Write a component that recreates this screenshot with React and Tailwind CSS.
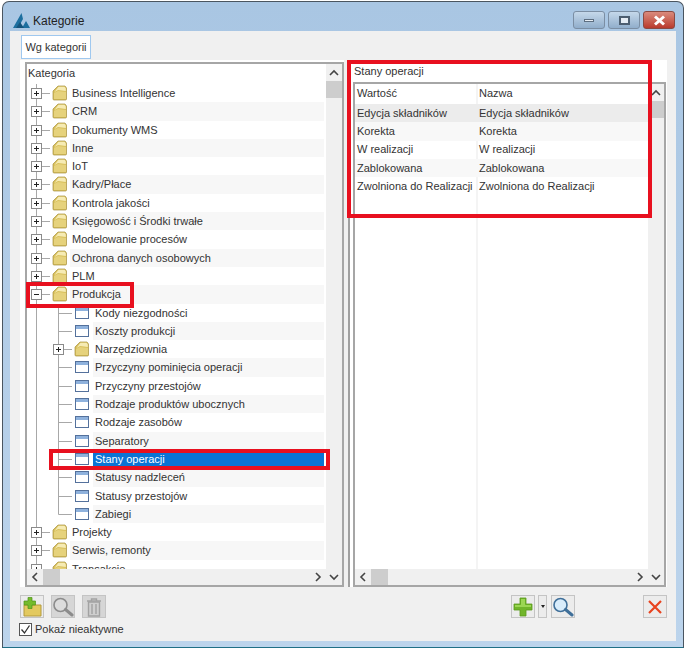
const topItems = [
  "Business Intelligence", "CRM", "Dokumenty WMS", "Inne", "IoT", "Kadry/Płace", "Kontrola jakości",
  "Księgowość i Środki trwałe", "Modelowanie procesów", "Ochrona danych osobowych", "PLM",
];
const children = [
  ["Kody niezgodności", "win"], ["Koszty produkcji", "win"], ["Narzędziownia", "folder"],
  ["Przyczyny pominięcia operacji", "win"], ["Przyczyny przestojów", "win"], ["Rodzaje produktów ubocznych", "win"],
  ["Rodzaje zasobów", "win"], ["Separatory", "win"], ["Stany operacji", "win"], ["Statusy nadzleceń", "win"],
  ["Statusy przestojów", "win"], ["Zabiegi", "win"],
];
const rows = ["Edycja składników", "Korekta", "W realizacji", "Zablokowana", "Zwolniona do Realizacji"];

function Folder({ x }) {
  return (
    <g transform={`translate(${x} 1)`}>
      <path d="M1 6 L6 1 L13 1 L14.5 3 L14.5 14 Q14.5 15 13.5 15 L2 15 Q1 15 1 14 Z" fill="#d8c05c" stroke="#a8913f" strokeWidth="0.7" />
      <path d="M6.5 1.7 L12.6 1.7 L13.8 3.4 L13.8 6 L6 5 L2.5 7 Z" fill="#f6ebb4" />
      <path d="M2 8 L6 6 L14 7 L14 14 L2 14 Z" fill="#e6d27c" />
    </g>
  );
}

function Win({ x }) {
  return (
    <g transform={`translate(${x} 3)`}>
      <rect x="0.5" y="0.5" width="13" height="11" fill="#fff" stroke="#54719c" />
      <rect x="1" y="1" width="12" height="3" fill="#8fb2dd" />
    </g>
  );
}

function Box({ x, open }) {
  return (
    <g>
      <rect x={x - 4.5} y="4.5" width="10" height="10" fill="#fff" stroke="#8a8a8a" />
      <path d={`M${x - 2} 9.5 H${x + 3}`} stroke="#222" />
      {!open && <path d={`M${x + 0.5} 7 V12`} stroke="#222" />}
    </g>
  );
}

function TreeRow({ label, kind = "folder", level = 0, open, last, selected, band }) {
  const w = level ? 66 : 43;
  return (
    <div className="flex h-[18.3px] shrink-0">
      <svg width={w} height="19" className="shrink-0 overflow-visible">
        <path d="M9.5 0 V19" stroke="#a8a8a8" />
        {level === 0 && <path d="M14 9.5 H23" stroke="#a8a8a8" />}
        {level === 1 && <path d={`M31.5 0 V${last ? 9.5 : 19}`} stroke="#a8a8a8" />}
        {level === 1 && <path d="M31.5 9.5 H45" stroke="#a8a8a8" />}
        {level === 0 && <Box x={9} open={open} />}
        {level === 0 && <Folder x={25} />}
        {level === 1 && kind === "folder" && <Box x={31} />}
        {level === 1 && kind === "folder" && <Folder x={47} />}
        {level === 1 && kind === "win" && <Win x={48} />}
      </svg>
      <div className={`flex-1 pl-[2px] mr-[2px] leading-[18px] whitespace-nowrap ${selected ? "bg-[#0a74d4] text-white" : band ? "bg-[#f7f7f7]" : ""}`}>
        {label}
      </div>
    </div>
  );
}

function Arrow({ dir }) {
  const d = { up: "M1 6 L5 2 L9 6", down: "M1 2 L5 6 L9 2", left: "M6 1 L2 5 L6 9", right: "M2 1 L6 5 L2 9" }[dir];
  const horiz = dir === "left" || dir === "right";
  return (
    <svg width={horiz ? 8 : 10} height={horiz ? 10 : 8} className="shrink-0">
      <path d={d} fill="none" stroke="#444" strokeWidth="1.6" />
    </svg>
  );
}

function VScroll() {
  return (
    <div className="w-[16px] shrink-0 bg-[#f0f0f0] flex flex-col items-center">
      <div className="h-[17px] w-full flex items-center justify-center shrink-0"><Arrow dir="up" /></div>
      <div className="h-[17px] w-full bg-[#cdcdcd] shrink-0" />
    </div>
  );
}

function HScroll() {
  return (
    <div className="h-[16px] shrink-0 flex">
      <div className="flex-1 bg-[#f0f0f0] flex items-center">
        <div className="w-[16px] flex justify-center shrink-0"><Arrow dir="left" /></div>
        <div className="w-[17px] h-[16px] bg-[#cdcdcd] shrink-0" />
        <div className="flex-1" />
        <div className="w-[16px] flex justify-center shrink-0"><Arrow dir="right" /></div>
      </div>
      <div className="w-[16px] bg-[#f0f0f0] flex items-center justify-center shrink-0"><Arrow dir="down" /></div>
    </div>
  );
}

function ToolButton({ children, disabled, className = "w-[24px]" }) {
  return (
    <div className={`h-[23px] shrink-0 border border-[#c4c4c4] flex items-center justify-center ${disabled ? "bg-[#d6d6d6]" : "bg-[#ececec]"} ${className}`}>
      {children}
    </div>
  );
}

function GreenPlus({ size = 20 }) {
  return (
    <svg width={size} height={size} viewBox="0 0 20 20">
      <path d="M7 1 H13 V7 H19 V13 H13 V19 H7 V13 H1 V7 H7 Z" fill="#70b52a" stroke="#5a9a1c" strokeWidth="0.8" />
      <path d="M8 2 H12 V8 H18 V10 H2 V8 H8 Z" fill="#9bd653" />
    </svg>
  );
}

function Lens({ color, glass }) {
  return (
    <svg width="22" height="20" viewBox="0 0 22 20">
      <circle cx="8.5" cy="8" r="6.5" fill={glass} stroke={color} strokeWidth="1.6" />
      <path d="M13.5 12.5 L20 18" stroke={color} strokeWidth="3" strokeLinecap="round" />
    </svg>
  );
}

export default function App() {
  return (
    <div
      className="relative w-[686px] h-[650px] overflow-hidden bg-white text-[#333] text-[11px]"
      style={{ fontFamily: '"Liberation Sans", Arial, sans-serif' }}
    >
      {/* window frame */}
      <div className="mx-[2px] mt-px h-[647px] rounded-t-[7px] border border-[#4a5560] border-b-[#1f6f86] bg-gradient-to-b from-[#a9c6e3] to-[#bcd4ec] flex flex-col">
        <div className="h-[29px] shrink-0 flex items-start pl-[10px] pr-[8px] pt-[9px]">
          <svg width="17" height="15" viewBox="0 0 17 15" className="shrink-0 mt-[2px]">
            <path d="M8.5 0 L13 8 L9 15 L17 15 Z M8.5 0 L0 15 L5 15 L10 6 Z" fill="#1d6f9f" />
            <path d="M7 9 L11 15 L3 15 Z" fill="#14547c" />
          </svg>
          <span className="ml-[3px] mt-[2px] text-[12px] leading-[16px] text-[#222]">Kategorie</span>
          <div className="ml-auto flex gap-[3px]">
            <div className="w-[32px] h-[18px] rounded-[3px] border border-[#7b8ea3] bg-gradient-to-b from-[#c5d8ea] to-[#91aecb] flex items-center justify-center">
              <div className="w-[10px] h-[3px] bg-[#e6edf4] border border-[#5d6e80]" />
            </div>
            <div className="w-[32px] h-[18px] rounded-[3px] border border-[#7b8ea3] bg-gradient-to-b from-[#c5d8ea] to-[#91aecb] flex items-center justify-center">
              <div className="w-[11px] h-[9px] border-2 border-[#4d5e70] bg-[#e6edf4]" />
            </div>
            <div className="w-[32px] h-[18px] rounded-[3px] border border-[#8a4a42] bg-gradient-to-b from-[#d98a7d] to-[#b9392c] flex items-center justify-center">
              <svg width="13" height="11"><path d="M2 1.5 L11 9.5 M11 1.5 L2 9.5" stroke="#fff" strokeWidth="3" /></svg>
            </div>
          </div>
        </div>

        <div className="mx-[7px] h-[610px] shrink-0 bg-[#f0f0f0] flex flex-col pl-[8px] pr-[9px]">
          <div className="h-[29px] shrink-0 pl-[3px] pt-[4px]">
            <div className="w-[70px] h-[24px] bg-white border border-[#9fc8ef] flex items-center justify-center whitespace-nowrap">Wg kategorii</div>
          </div>

          <div className="h-[527px] shrink-0 flex ml-[2px]">
            {/* left pane */}
            <div className="w-[324px] shrink-0 bg-white pl-[5px] pt-[2px]">
              <div className="h-[525px] border-2 border-[#a6a6a6] flex flex-col">
                <div className="flex-1 min-h-0 flex">
                  <div className="flex-1 min-w-0 overflow-hidden">
                    <div className="h-[20px] pl-[1px] leading-[19px]">Kategoria</div>
                    {topItems.map((t, i) => (
                      <TreeRow key={t} label={t} band={i % 2 === 1} />
                    ))}
                    <TreeRow label="Produkcja" open band />
                    {children.map(([t, k], i) => (
                      <TreeRow key={t} label={t} kind={k} level={1} band={i % 2 === 1} selected={t === "Stany operacji"} last={i === children.length - 1} />
                    ))}
                    <TreeRow label="Projekty" />
                    <TreeRow label="Serwis, remonty" band />
                    <TreeRow label="Transakcje" />
                  </div>
                  <VScroll />
                </div>
                <HScroll />
              </div>
            </div>

            {/* splitter */}
            <div className="w-[4px] shrink-0" />

            {/* right pane */}
            <div className="w-[319px] shrink-0 bg-white border-l-2 border-[#a0a0a0] pl-[3px] pr-px flex flex-col">
              <div className="h-[22px] shrink-0 pl-px leading-[22px]">Stany operacji</div>
              <div className="flex-1 min-h-0 border-2 border-[#a6a6a6] flex flex-col">
                <div className="flex-1 min-h-0 flex">
                  <div className="flex-1 min-w-0 relative">
                    <div className="absolute top-0 bottom-0 left-[121px] w-[2px] bg-[#f4f4f4]" />
                    <div className="relative flex h-[20px] pb-[1px] items-center">
                      <div className="w-[124px] pl-[2px]">Wartość</div>
                      <div>Nazwa</div>
                    </div>
                    {rows.map((r, i) => (
                      <div key={r} className={`relative flex h-[18.3px] items-center whitespace-nowrap ${i === 0 ? "bg-[#ececec]" : i % 2 === 1 ? "bg-[#f8f8f8]" : ""}`}>
                        <div className="w-[124px] pl-[2px]">{r}</div>
                        <div>{r}</div>
                      </div>
                    ))}
                  </div>
                  <VScroll />
                </div>
                <HScroll />
              </div>
            </div>
          </div>

          {/* toolbar */}
          <div className="h-[31px] shrink-0 flex items-end pl-[2px]">
            <ToolButton>
              <svg width="22" height="20" viewBox="0 0 22 20">
                <path d="M3 8 H20 V19 H3 Z" fill="#e3c95f" stroke="#b49a3c" />
                <path d="M7 0.5 H11 V4 H14.5 V8 H11 V11.5 H7 V8 H3 V4 H7 Z" fill="#74bb2c" stroke="#4f9417" strokeWidth="0.7" />
              </svg>
            </ToolButton>
            <ToolButton disabled className="w-[24px] ml-[7px]"><Lens color="#8c8c8c" glass="#dcdcdc" /></ToolButton>
            <ToolButton disabled className="w-[24px] ml-[7px]">
              <svg width="16" height="20" viewBox="0 0 16 20">
                <path d="M1 4 H15 M5.5 4 V2 H10.5 V4" fill="none" stroke="#a2a2a2" strokeWidth="1.4" />
                <path d="M2.5 5 H13.5 V19 H2.5 Z M6 7 V17 M10 7 V17" fill="#cfcfcf" stroke="#a2a2a2" strokeWidth="1.4" />
              </svg>
            </ToolButton>
            <div className="flex-1" />
            <ToolButton><GreenPlus /></ToolButton>
            <ToolButton className="w-[9px] ml-[3px]">
              <div className="border-x-[2.5px] border-t-[3px] border-x-transparent border-t-[#222]" />
            </ToolButton>
            <ToolButton className="w-[24px] ml-[4px]"><Lens color="#3f6f99" glass="#d8ecfb" /></ToolButton>
            <div className="w-[68px] shrink-0" />
            <ToolButton>
              <svg width="16" height="16"><path d="M2 2 L14 14 M14 2 L2 14" stroke="#e8431f" strokeWidth="2.2" /></svg>
            </ToolButton>
          </div>

          <div className="h-[23px] shrink-0 flex items-center pl-px">
            <div className="w-[13px] h-[13px] border border-[#555] bg-white flex items-center justify-center">
              <svg width="11" height="11"><path d="M1.5 5.5 L4.5 9 L9.5 1.5" fill="none" stroke="#333" strokeWidth="1.3" /></svg>
            </div>
            <span className="ml-[3px]">Pokaż nieaktywne</span>
          </div>
        </div>
      </div>

      {/* red annotation boxes */}
      <div className="absolute left-[347px] top-[60px] w-[305px] h-[158px] border-[4px] border-[#e8101f]" />
      <div className="absolute left-[26px] top-[282px] w-[108px] h-[26px] border-[4px] border-[#e8101f]" />
      <div className="absolute left-[49px] top-[449px] w-[281px] h-[21px] border-[4px] border-[#e8101f]" />
    </div>
  );
}
